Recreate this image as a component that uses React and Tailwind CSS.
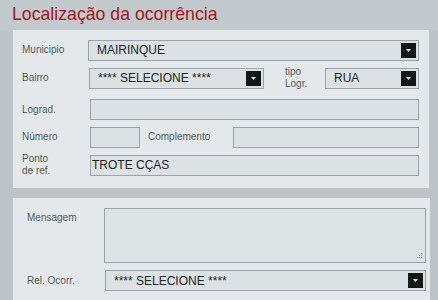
import React from "react";

const label = "text-[10px] leading-[12px] text-[#555b5e]";
const field =
  "h-[21px] border border-[#9aa3a7] bg-[#dce1e4] flex items-center text-[12px] text-[#1c2420] uppercase";

function DropBtn() {
  return (
    <span className="w-[15px] h-[15px] bg-[#0f1814] flex items-center justify-center shrink-0">
      <svg width="5" height="3" viewBox="0 0 5 3">
        <path d="M0 0h5L2.5 3z" fill="#d8dcd8" />
      </svg>
    </span>
  );
}

function Select({ value, className = "" }) {
  return (
    <div className={field + " justify-between pl-[8px] pr-[2px] " + className}>
      <span>{value}</span>
      <DropBtn />
    </div>
  );
}

export default function App() {
  return (
    <div className="w-[438px] h-[300px] overflow-hidden bg-[#bcc4c8] font-['Liberation_Sans',Arial,sans-serif]">
      <div className="h-[30px] pl-[12px] pt-[1px] text-[17.7px] text-[#a5151b] bg-[#c3cacd]">
        Localização da ocorrência
      </div>

      <div className="ml-[13px] mr-[9px] h-[158px] bg-[#e4e8ea] pl-[9px] pr-[10px] pt-[10px] flex flex-col">
        <div className="flex items-center h-[20px]">
          <span className={label + " w-[66px]"}>Municipio</span>
          <Select value="MAIRINQUE" className="flex-1 h-[20px]" />
        </div>

        <div className="flex items-center mt-[7px] h-[22px]">
          <span className={label + " w-[67px]"}>Bairro</span>
          <Select value="**** SELECIONE ****" className="w-[175px]" />
          <span className={label + " ml-[21px] w-[40px] text-[10.5px]"}>
            tipo
            <br />
            Logr.
          </span>
          <Select value="RUA" className="flex-1" />
        </div>

        <div className="flex items-center mt-[10px] h-[21px]">
          <span className={label + " w-[68px]"}>Lograd.</span>
          <div className={field + " flex-1"} />
        </div>

        <div className="flex items-center mt-[7px] h-[20px]">
          <span className={label + " w-[68px]"}>Número</span>
          <div className={field + " w-[50px] h-[20px]"} />
          <span className={label + " ml-[8px] w-[85px]"}>Complemento</span>
          <div className={field + " flex-1 h-[20px]"} />
        </div>

        <div className="flex items-center mt-[7px] h-[22px]">
          <span className={label + " w-[68px]"}>
            Ponto
            <br />
            de ref.
          </span>
          <div className={field + " flex-1 pl-[1px]"}>TROTE CÇAS</div>
        </div>
      </div>

      <div className="mt-[10px] ml-[13px] mr-[8px] h-[110px] bg-[#e4e8ea] pl-[14px] pr-[4px] pt-[10px] flex flex-col">
        <div className="flex">
          <span className={label + " w-[77px] pt-[4px]"}>Mensagem</span>
          <div className="relative flex-1 h-[55px] border border-[#9aa3a7] bg-[#dde2e5]">
            <svg className="absolute right-[2px] bottom-[2px]" width="8" height="8" viewBox="0 0 8 8">
              <g fill="#8a9397">
                <rect x="6" y="1" width="1" height="1" />
                <rect x="4" y="3" width="1" height="1" />
                <rect x="6" y="3" width="1" height="1" />
                <rect x="2" y="5" width="1" height="1" />
                <rect x="4" y="5" width="1" height="1" />
                <rect x="6" y="5" width="1" height="1" />
              </g>
            </svg>
          </div>
        </div>
        <div className="flex items-center mt-[7px]">
          <span className={label + " w-[78px]"}>Rel. Ocorr.</span>
          <Select value="**** SELECIONE ****" className="flex-1 h-[20px]" />
        </div>
      </div>
    </div>
  );
}
